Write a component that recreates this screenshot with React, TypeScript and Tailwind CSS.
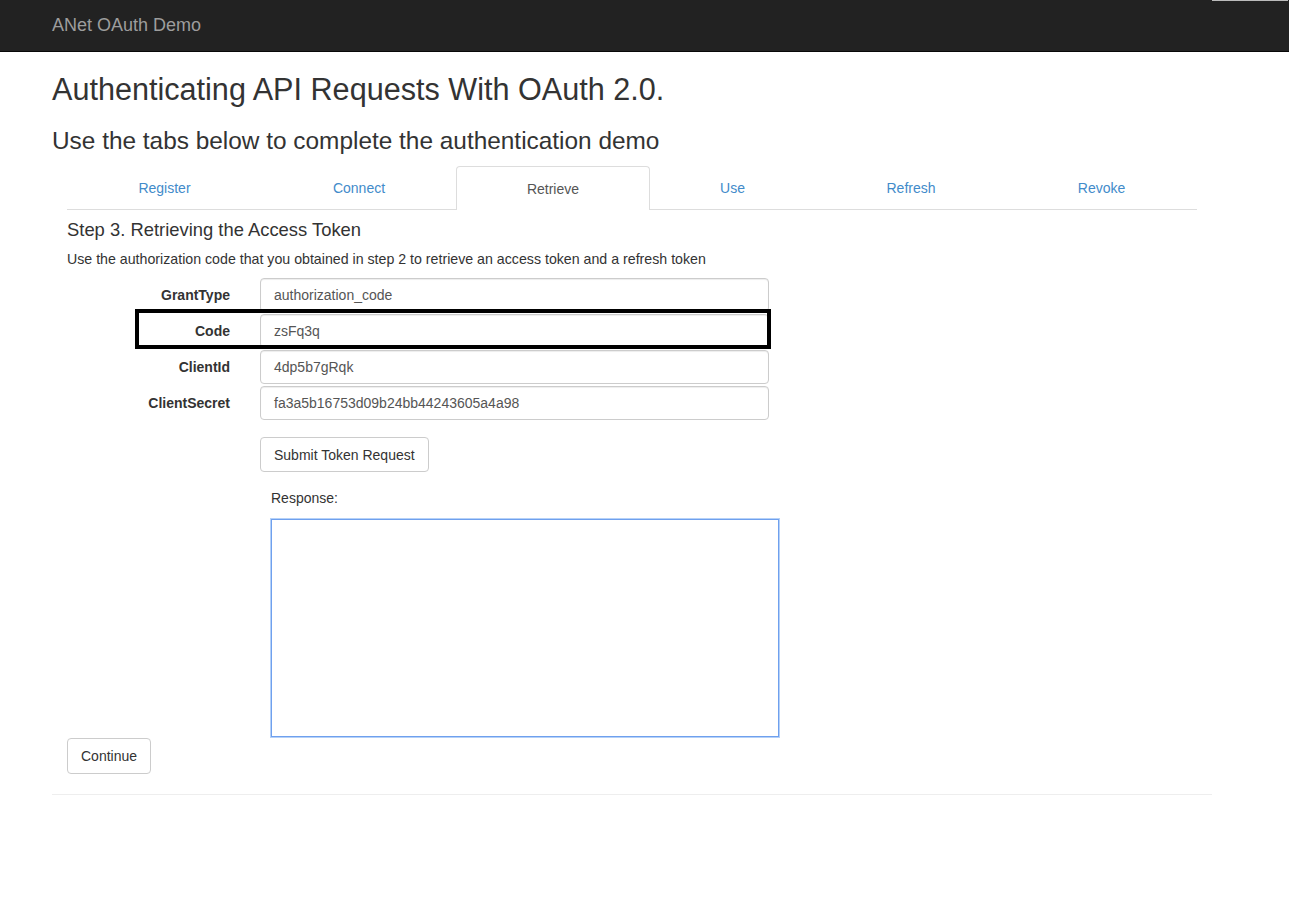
import React from "react"

const tabs = [
  { label: "Register", w: "w-[195px]" },
  { label: "Connect", w: "w-[194px]" },
  { label: "Retrieve", w: "w-[194px]", active: true },
  { label: "Use", w: "w-[165px]" },
  { label: "Refresh", w: "w-[192px]" },
  { label: "Revoke", w: "w-[189px]" },
]

const fields = [
  { label: "GrantType", value: "authorization_code" },
  { label: "Code", value: "zsFq3q", marked: true },
  { label: "ClientId", value: "4dp5b7gRqk" },
  { label: "ClientSecret", value: "fa3a5b16753d09b24bb44243605a4a98" },
]

export default function App() {
  return (
    <div className="min-h-[907px] bg-white text-[#333] font-['Liberation_Sans',Arial,sans-serif]">
      <nav className="relative h-[52px] border-b border-[#080808] bg-[#222]">
        <div className="absolute right-[1px] top-0 h-px w-[76px] bg-[#bbb]" />
        <div className="flex h-[51px] items-center pl-[52px] text-[18px] text-[#9d9d9d]">
          ANet OAuth Demo
        </div>
      </nav>

      <main className="ml-[52px] w-[1160px]">
        <h1 className="mt-[17px] text-[30.6px] leading-[40px] text-[#333]">
          Authenticating API Requests With OAuth 2.0.
        </h1>
        <h3 className="mt-[17px] text-[24.4px] leading-[30px] text-[#333]">
          Use the tabs below to complete the authentication demo
        </h3>

        <div className="px-[15px]">
          <ul className="mt-[10px] flex border-b border-[#ddd]">
            {tabs.map((t) => (
              <li
                key={t.label}
                className={
                  t.active
                    ? `${t.w} -mb-px flex h-[44px] items-center justify-center rounded-t-[4px] border border-b-0 border-[#ddd] bg-white pt-[1px] text-[14px] text-[#555]`
                    : `${t.w} flex h-[43px] items-center justify-center pt-[2px] text-[14px] text-[#428bca]`
                }
              >
                {t.label}
              </li>
            ))}
          </ul>

          <h4 className="mt-[8px] text-[18.4px] leading-[24px]">Step 3. Retrieving the Access Token</h4>
          <p className="mt-[7px] text-[14.2px] leading-[20px]">
            Use the authorization code that you obtained in step 2 to retrieve an access token and a refresh token
          </p>

          <div className="mt-[9px] flex flex-col gap-[2px]">
            {fields.map((f) => (
              <div key={f.label} className="relative flex items-center">
                <label className="w-[163px] text-right text-[14px] font-bold">{f.label}</label>
                <div className="ml-[30px] flex h-[34px] w-[509px] items-center rounded-[4px] border border-[#ccc] px-[13px] text-[14px] text-[#555] shadow-[inset_0_1px_1px_rgba(0,0,0,0.075)]">
                  {f.value}
                </div>
                {f.marked && (
                  <div className="absolute left-[68px] top-[-5px] h-[40px] w-[636px] border-[4px] border-black" />
                )}
              </div>
            ))}
          </div>

          <div className="ml-[193px] mt-[17px]">
            <button className="h-[35px] rounded-[4px] border border-[#ccc] bg-white px-[13px] pt-[1px] text-[14px] text-[#333]">
              Submit Token Request
            </button>
          </div>

          <div className="ml-[204px] mt-[16px] text-[14px] leading-[20px]">Response:</div>
          <div className="ml-[204px] mt-[11px] h-[218px] w-[508px] border border-[#6fa0ee] shadow-[0_0_0_1px_rgba(150,190,245,0.7)]" />

          <button className="mt-[1px] h-[36px] rounded-[4px] border border-[#ccc] bg-white px-[13px] pt-[1px] text-[14px] text-[#333]">
            Continue
          </button>
        </div>

        <hr className="mt-[20px] border-t border-[#eee]" />
      </main>
    </div>
  )
}
